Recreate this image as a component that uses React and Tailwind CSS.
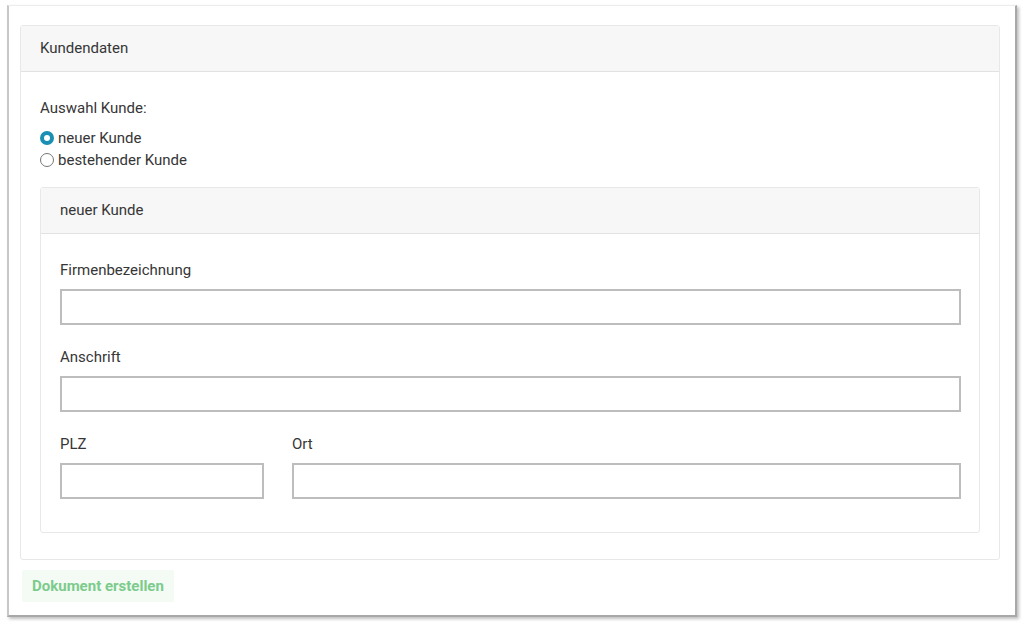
export default function App() {
  return (
    <div className="w-[1024px] h-[627px] bg-white pt-[5px] pl-[7px] font-['Roboto',sans-serif] text-[15px] text-[#363636]">
      <div className="w-[1010px] h-[612px] bg-white border-l-2 border-t border-l-[#c8c8c8] border-t-[#ececec] border-r-2 border-b-2 border-r-[#a8a8a8] border-b-[#a8a8a8] shadow-[2px_2px_3px_rgba(0,0,0,0.25)] pt-[19px] pl-[11px] pr-[14px]">
        {/* Kundendaten card */}
        <div className="w-[980px] h-[535px] border border-[#e8e8e8] rounded-[3px] flex flex-col">
          <div className="h-[46px] bg-[#f7f7f7] border-b border-[#e2e2e2] flex items-center px-[19px]">
            Kundendaten
          </div>
          <div className="px-[19px] pt-[26px]">
            <div className="mb-[9px] h-[20px] leading-[20px]">Auswahl Kunde:</div>
            <label className="flex items-center h-[22px]">
              <span className="w-[14px] h-[14px] rounded-full bg-[#1a8fb3] flex items-center justify-center mr-[4px]">
                <span className="w-[6px] h-[6px] rounded-full bg-white" />
              </span>
              neuer Kunde
            </label>
            <label className="flex items-center h-[22px]">
              <span className="w-[14px] h-[14px] rounded-full border border-[#767676] bg-white mr-[4px]" />
              bestehender Kunde
            </label>

            {/* neuer Kunde card */}
            <div className="mt-[16px] w-[940px] h-[346px] border border-[#e8e8e8] rounded-[3px]">
              <div className="h-[46px] bg-[#f7f7f7] border-b border-[#e2e2e2] flex items-center px-[19px]">
                neuer Kunde
              </div>
              <div className="px-[19px] pt-[26px]">
                <div className="h-[20px] leading-[20px]">Firmenbezeichnung</div>
                <div className="mt-[9px] h-[36px] w-[901px] border-2 border-[#bdbdbd]" />
                <div className="mt-[22px] h-[20px] leading-[20px]">Anschrift</div>
                <div className="mt-[9px] h-[36px] w-[901px] border-2 border-[#bdbdbd]" />
                <div className="mt-[22px] flex gap-[28px]">
                  <div className="w-[204px]">
                    <div className="h-[20px] leading-[20px]">PLZ</div>
                    <div className="mt-[9px] h-[36px] w-[204px] border-2 border-[#bdbdbd]" />
                  </div>
                  <div className="w-[669px]">
                    <div className="h-[20px] leading-[20px]">Ort</div>
                    <div className="mt-[9px] h-[36px] w-[669px] border-2 border-[#bdbdbd]" />
                  </div>
                </div>
              </div>
            </div>
          </div>
        </div>

        <button className="mt-[10px] ml-[2px] h-[32px] px-[10px] bg-[#f3fbf4] rounded-[2px] text-[#7ccb8c] font-bold text-[15px]">
          Dokument erstellen
        </button>
      </div>
    </div>
  );
}
